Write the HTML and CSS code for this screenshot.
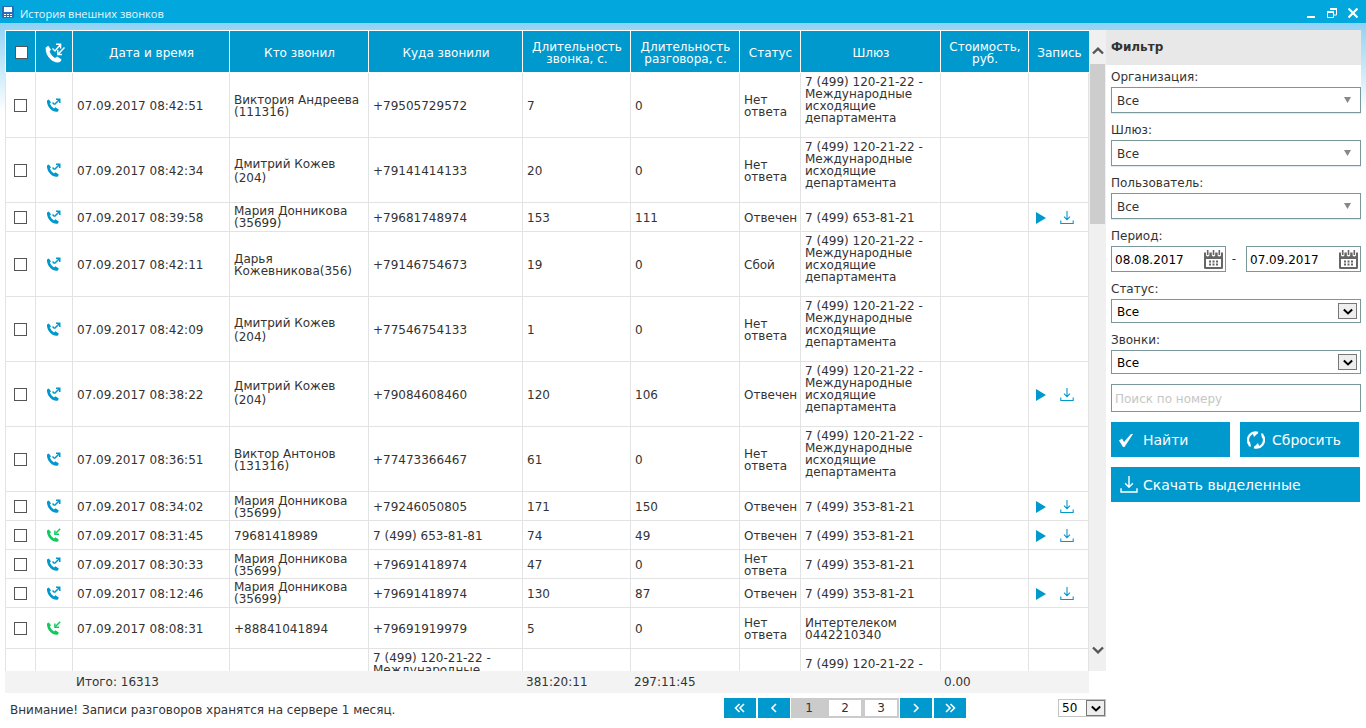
FILE: index.html
```
<!DOCTYPE html>
<html lang="ru">
<head>
<meta charset="utf-8">
<title>История внешних звонков</title>
<link rel="stylesheet" href="styles.css">
</head>
<body>
<svg class="defs" aria-hidden="true">
  <symbol id="handset" viewBox="0 0 14 14"><path fill="currentColor" d="M0 2.600 1.800 1.400 4 4.200 2.900 5.600C3.600 7.400 5 9.200 7 10.400L8.400 9.200 11.800 11.400 11 13.400C8.600 14.200 5.600 13.200 3.400 11 1.200 8.800-.3 5.600 0 2.600Z"/></symbol>
  <symbol id="call-out" viewBox="0 0 14 14"><use href="#handset" width="14" height="14"/><path fill="none" stroke="currentColor" stroke-width="1.500" d="M5.500 4.500 7.500 6.500M7.500 6.500 12 2"/><path fill="currentColor" d="M9 .5H13.500V5H12V2H9Z"/></symbol>
  <symbol id="call-in" viewBox="0 0 14 14"><use href="#handset" width="14" height="14"/><path fill="none" stroke="currentColor" stroke-width="1.500" d="M13.200.8 8.500 5.500"/><path fill="currentColor" d="M7.200 2.500H8.600V5.600H12V7H7.200Z"/></symbol>
  <symbol id="call-both" viewBox="0 0 20 20"><path fill="currentColor" d="M.8 4.400 3.200 2.800 6 6.400 4.600 8.600C5.600 11.400 7.600 13.600 10 15L12.200 13.400 16.600 16.600 15.200 19C12 20.200 8.200 19 5.200 16 2 13 .2 8.600.8 4.400Z"/><path fill="none" stroke="currentColor" stroke-width="1.400" d="M7.500 5.500 10 8 15 2M11 1.200H15.600V5.500M19.500 4.500 13.500 10.800M12.700 7V11.500H17"/></symbol>
  <symbol id="play" viewBox="0 0 10 12"><path fill="currentColor" d="M0 0V12L10 6Z"/></symbol>
  <symbol id="download" viewBox="0 0 14 14"><path fill="none" stroke="currentColor" stroke-width="1.100" d="M7 0V8.500M4 5.700 7 8.700 10 5.700M.8 9.500V12.500H13.200V9.500"/></symbol>
  <symbol id="check" viewBox="0 0 16 16"><path fill="currentColor" d="M1 8.500 4 6.500 6 10 13 2 15 2 6.500 15H5Z"/></symbol>
  <symbol id="refresh" viewBox="0 0 18 18"><path fill="none" stroke="currentColor" stroke-width="2.200" d="M2 12.500A7.500 7.500 0 0 1 11 1.800M16 5.500A7.500 7.500 0 0 1 7 16.200"/><path fill="currentColor" d="M5.500 2H11L7 6ZM12.500 16H7L11 12ZM0 11H3L4 15.500H2ZM18 7H15L14 2.500H16Z"/></symbol>
  <symbol id="calendar" viewBox="0 0 19 19"><path fill="#666" d="M0 2.500H2V5.500Q3.700 7.500 5.400 5.500V2.500H7.800V5.500Q9.500 7.500 11.200 5.500V2.500H13.600V5.500Q15.300 7.500 17 5.500V2.500H19V17.500Q19 19 17.500 19H1.500Q0 19 0 17.500Z"/><path fill="#fff" d="M2 9H17V17H2Z"/><path fill="#666" d="M2.900 0H4.500V5H2.900ZM8.700 0H10.300V5H8.700ZM14.500 0H16.100V5H14.500ZM5 10.500H7V12.500H5ZM8.500 10.500H10.500V12.500H8.500ZM12 10.500H14V12.500H12ZM5 13.500H7V15.500H5ZM8.500 13.500H10.500V15.500H8.500ZM12 13.500H14V15.500H12Z"/></symbol>
  <symbol id="triangle" viewBox="0 0 7 6"><path fill="#888" d="M0 0H7L3.500 6Z"/></symbol>
  <symbol id="chevron" viewBox="0 0 12 8"><path fill="none" stroke="currentColor" stroke-width="2.400" d="M1 1.500 6 6.300 11 1.500"/></symbol>
</svg>
<header class="titlebar">
  <svg class="app-icon" viewBox="0 0 12 12"><path fill="#2e6cb5" d="M0 0H12V12H0Z"/><path fill="#fff" d="M2 1H10V6H2ZM2 8H4V9H2ZM5 8H7V9H5ZM8 8H10V9H8ZM2 10H4V11H2ZM5 10H7V11H5ZM8 10H10V11H8Z"/></svg>
  <h1>История внешних звонков</h1>
  <div class="window-buttons">
    <button aria-label="Свернуть"><svg viewBox="0 0 10 12"><path fill="#fff" d="M1 9H9V11H1Z"/></svg></button>
    <button aria-label="Восстановить"><svg viewBox="0 0 10 12"><path fill="none" stroke="#fff" d="M.5 5.500H6.500V10.500H.5ZM3 2.500H9.500V8H7"/><path fill="#fff" d="M0 4H7V6H0ZM3 1H10V3H3Z"/></svg></button>
    <button aria-label="Закрыть"><svg viewBox="0 0 10 12"><path fill="none" stroke="#fff" stroke-width="2.200" d="M.5 1.500 9.500 10.500M9.500 1.500.5 10.500"/></svg></button>
  </div>
</header>
<div class="window">
<main class="journal">
  <div class="grid-area">
    <div class="grid-clip">
    <table class="calls">
      <colgroup><col class="c-check"><col class="c-type"><col class="c-date"><col class="c-from"><col class="c-to"><col class="c-dur"><col class="c-talk"><col class="c-status"><col class="c-gate"><col class="c-cost"><col class="c-rec"></colgroup>
      <thead><tr><th><input type="checkbox" aria-label="Выбрать все"></th><th><svg class="head-call"><use href="#call-both"/></svg></th><th>Дата и время</th><th>Кто звонил</th><th>Куда звонили</th><th>Длительность<br>звонка, с.</th><th>Длительность<br>разговора, с.</th><th>Статус</th><th>Шлюз</th><th>Стоимость,<br>руб.</th><th>Запись</th></tr></thead>
      <tbody>
      <tr><td class="mid"><input type="checkbox" aria-label="Выбрать"></td><td class="mid"><svg class="call"><use href="#call-out"/></svg></td><td>07.09.2017 08:42:51</td><td>Виктория Андреева<br>(111316)</td><td>+79505729572</td><td>7</td><td>0</td><td>Нет<br>ответа</td><td>7 (499) 120-21-22 -<br>Международные<br>исходящие<br>департамента<br><br></td><td></td><td></td></tr>
      <tr><td class="mid"><input type="checkbox" aria-label="Выбрать"></td><td class="mid"><svg class="call"><use href="#call-out"/></svg></td><td>07.09.2017 08:42:34</td><td class="loose">Дмитрий Кожев<br>(204)</td><td>+79141414133</td><td>20</td><td>0</td><td>Нет<br>ответа</td><td>7 (499) 120-21-22 -<br>Международные<br>исходящие<br>департамента<br><br></td><td></td><td></td></tr>
      <tr><td class="mid"><input type="checkbox" aria-label="Выбрать"></td><td class="mid"><svg class="call"><use href="#call-out"/></svg></td><td>07.09.2017 08:39:58</td><td class="top">Мария Донникова<br>(35699)</td><td>+79681748974</td><td>153</td><td>111</td><td>Отвечен</td><td>7 (499) 653-81-21</td><td></td><td><div class="record"><button aria-label="Слушать"><svg class="play"><use href="#play"/></svg></button><button aria-label="Скачать"><svg class="load"><use href="#download"/></svg></button></div></td></tr>
      <tr><td class="mid"><input type="checkbox" aria-label="Выбрать"></td><td class="mid"><svg class="call"><use href="#call-out"/></svg></td><td>07.09.2017 08:42:11</td><td>Дарья<br>Кожевникова(356)</td><td>+79146754673</td><td>19</td><td>0</td><td>Сбой</td><td>7 (499) 120-21-22 -<br>Международные<br>исходящие<br>департамента<br><br></td><td></td><td></td></tr>
      <tr><td class="mid"><input type="checkbox" aria-label="Выбрать"></td><td class="mid"><svg class="call"><use href="#call-out"/></svg></td><td>07.09.2017 08:42:09</td><td class="loose">Дмитрий Кожев<br>(204)</td><td>+77546754133</td><td>1</td><td>0</td><td>Нет<br>ответа</td><td>7 (499) 120-21-22 -<br>Международные<br>исходящие<br>департамента<br><br></td><td></td><td></td></tr>
      <tr><td class="mid"><input type="checkbox" aria-label="Выбрать"></td><td class="mid"><svg class="call"><use href="#call-out"/></svg></td><td>07.09.2017 08:38:22</td><td class="loose raised">Дмитрий Кожев<br>(204)</td><td>+79084608460</td><td>120</td><td>106</td><td>Отвечен</td><td>7 (499) 120-21-22 -<br>Международные<br>исходящие<br>департамента<br><br></td><td></td><td><div class="record"><button aria-label="Слушать"><svg class="play"><use href="#play"/></svg></button><button aria-label="Скачать"><svg class="load"><use href="#download"/></svg></button></div></td></tr>
      <tr><td class="mid"><input type="checkbox" aria-label="Выбрать"></td><td class="mid"><svg class="call"><use href="#call-out"/></svg></td><td>07.09.2017 08:36:51</td><td>Виктор Антонов<br>(131316)</td><td>+77473366467</td><td>61</td><td>0</td><td>Нет<br>ответа</td><td>7 (499) 120-21-22 -<br>Международные<br>исходящие<br>департамента<br><br></td><td></td><td></td></tr>
      <tr><td class="mid"><input type="checkbox" aria-label="Выбрать"></td><td class="mid"><svg class="call"><use href="#call-out"/></svg></td><td>07.09.2017 08:34:02</td><td>Мария Донникова<br>(35699)</td><td>+79246050805</td><td>171</td><td>150</td><td>Отвечен</td><td>7 (499) 353-81-21</td><td></td><td><div class="record"><button aria-label="Слушать"><svg class="play"><use href="#play"/></svg></button><button aria-label="Скачать"><svg class="load"><use href="#download"/></svg></button></div></td></tr>
      <tr><td class="mid"><input type="checkbox" aria-label="Выбрать"></td><td class="mid"><svg class="call incoming"><use href="#call-in"/></svg></td><td>07.09.2017 08:31:45</td><td>79681418989</td><td>7 (499) 653-81-81</td><td>74</td><td>49</td><td>Отвечен</td><td>7 (499) 353-81-21</td><td></td><td><div class="record"><button aria-label="Слушать"><svg class="play"><use href="#play"/></svg></button><button aria-label="Скачать"><svg class="load"><use href="#download"/></svg></button></div></td></tr>
      <tr><td class="mid"><input type="checkbox" aria-label="Выбрать"></td><td class="mid"><svg class="call"><use href="#call-out"/></svg></td><td>07.09.2017 08:30:33</td><td>Мария Донникова<br>(35699)</td><td>+79691418974</td><td>47</td><td>0</td><td>Нет<br>ответа</td><td>7 (499) 353-81-21</td><td></td><td></td></tr>
      <tr><td class="mid"><input type="checkbox" aria-label="Выбрать"></td><td class="mid"><svg class="call"><use href="#call-out"/></svg></td><td>07.09.2017 08:12:46</td><td class="top">Мария Донникова<br>(35699)</td><td>+79691418974</td><td>130</td><td>87</td><td>Отвечен</td><td>7 (499) 353-81-21</td><td></td><td><div class="record"><button aria-label="Слушать"><svg class="play"><use href="#play"/></svg></button><button aria-label="Скачать"><svg class="load"><use href="#download"/></svg></button></div></td></tr>
      <tr class="tall"><td class="mid"><input type="checkbox" aria-label="Выбрать"></td><td class="mid"><svg class="call incoming"><use href="#call-in"/></svg></td><td>07.09.2017 08:08:31</td><td>+88841041894</td><td>+79691919979</td><td>5</td><td>0</td><td>Нет<br>ответа</td><td>Интертелеком<br>0442210340</td><td></td><td></td></tr>
      <tr><td></td><td></td><td></td><td></td><td>7 (499) 120-21-22 -<br>Международные<br><br><br><br></td><td></td><td></td><td></td><td>7 (499) 120-21-22 -<br><br><br><br></td><td></td><td></td></tr>
      </tbody>
    </table>
    </div>
    <div class="scrollbar">
      <button aria-label="Вверх"><svg class="up"><use href="#chevron"/></svg></button>
      <div class="track"><div class="thumb"></div></div>
      <button class="down" aria-label="Вниз"><svg><use href="#chevron"/></svg></button>
    </div>
  </div>
  <table class="totals">
    <colgroup><col class="c-check"><col class="c-type"><col class="c-date"><col class="c-from"><col class="c-to"><col class="c-dur"><col class="c-talk"><col class="c-status"><col class="c-gate"><col class="c-cost"><col class="c-rec"></colgroup>
    <tbody><tr><td></td><td></td><td>Итого: 16313</td><td></td><td></td><td>381:20:11</td><td>297:11:45</td><td></td><td></td><td>0.00</td><td></td></tr></tbody>
  </table>
  <footer class="bottom">
    <p>Внимание! Записи разговоров хранятся на сервере 1 месяц.</p>
    <nav class="pager">
      <button aria-label="Первая"><svg viewBox="0 0 12 12"><path d="M5.500 2 1.500 6 5.500 10M10 2 6 6 10 10"/></svg></button>
      <button aria-label="Назад"><svg viewBox="0 0 12 12"><path d="M8 2 4 6 8 10"/></svg></button>
      <div class="pages"><a class="current" href="#">1</a><a href="#">2</a><a href="#">3</a></div>
      <button aria-label="Вперёд"><svg viewBox="0 0 12 12"><path d="M4 2 8 6 4 10"/></svg></button>
      <button aria-label="Последняя"><svg viewBox="0 0 12 12"><path d="M2 2 6 6 2 10M6.500 2 10.500 6 6.500 10"/></svg></button>
    </nav>
    <div class="page-size"><select aria-label="Строк на странице"><option>50</option></select><span class="drop"><svg><use href="#chevron"/></svg></span></div>
  </footer>
</main>
<aside class="filter">
  <h2>Фильтр</h2>
  <form>
    <label for="org">Организация:</label>
    <div class="field combo"><select id="org"><option>Все</option></select><svg><use href="#triangle"/></svg></div>
    <label for="gate">Шлюз:</label>
    <div class="field combo"><select id="gate"><option>Все</option></select><svg><use href="#triangle"/></svg></div>
    <label for="user">Пользователь:</label>
    <div class="field combo"><select id="user"><option>Все</option></select><svg><use href="#triangle"/></svg></div>
    <label for="since">Период:</label>
    <div class="period">
      <div class="date"><input id="since" type="text" value="08.08.2017"><button type="button" aria-label="Календарь"><svg><use href="#calendar"/></svg></button></div>
      <span>-</span>
      <div class="date"><input type="text" value="07.09.2017" aria-label="Конец периода"><button type="button" aria-label="Календарь"><svg><use href="#calendar"/></svg></button></div>
    </div>
    <label for="status">Статус:</label>
    <div class="field native"><select id="status"><option>Все</option></select><span class="drop"><svg><use href="#chevron"/></svg></span></div>
    <label for="kind">Звонки:</label>
    <div class="field native"><select id="kind"><option>Все</option></select><span class="drop"><svg><use href="#chevron"/></svg></span></div>
    <input class="search" type="text" placeholder="Поиск по номеру" aria-label="Поиск по номеру">
    <div class="actions">
      <button type="button"><svg class="i-check"><use href="#check"/></svg>Найти</button>
      <button type="button"><svg class="i-refresh"><use href="#refresh"/></svg>Сбросить</button>
    </div>
    <button type="button" class="wide"><svg class="i-load"><use href="#download"/></svg>Скачать выделенные</button>
  </form>
</aside>
</div>
</body>
</html>
```

FILE: styles.css
```
* { box-sizing: border-box; }
body {
  margin: 0;
  height: 100vh;
  display: flex;
  flex-direction: column;
  overflow: hidden;
  background: linear-gradient(#8fd2f4 23px, #fff 112px);
  color: #333;
  font-family: "DejaVu Sans", Verdana, sans-serif;
  font-size: 12px;
  line-height: 12px;
}
.defs { position: absolute; width: 0; height: 0; }
button, input, select { font: inherit; color: inherit; margin: 0; }
button { padding: 0; border: 0; background: none; }
svg { display: block; }
select { appearance: none; border: 0; background: #fff; border-radius: 0; }

.titlebar {
  height: 23px;
  padding: 0 8px 0 2px;
  display: flex;
  align-items: center;
  gap: 6px;
  background: #02a8dd;
  color: #e6f7fd;
}
.titlebar h1 {
  flex: 1;
  margin: 4px 0 0;
  font: 11px/16px "Open Sans", "Noto Sans", sans-serif;
}
.app-icon { width: 12px; height: 12px; }
.window-buttons { display: flex; gap: 11px; padding-top: 3px; }
.window-buttons svg { width: 10px; height: 12px; }

.window { flex: 1; min-height: 0; display: flex; padding: 7px 5px 0; }
.journal { flex: 1; min-width: 0; display: flex; flex-direction: column; background: #fff; }
.grid-area { flex: 1; min-height: 0; display: flex; }
.grid-clip { flex: 1; min-width: 0; overflow: hidden; }

.calls, .totals { width: 100%; table-layout: fixed; border-spacing: 0; }
.c-check { width: 30px; }
.c-type { width: 37px; }
.c-date { width: 157px; }
.c-from { width: 139px; }
.c-to { width: 154px; }
.c-dur { width: 108px; }
.c-talk { width: 109px; }
.c-status { width: 61px; }
.c-gate { width: 140px; }
.c-cost { width: 88px; }
.c-rec { width: 61px; }
.calls th {
  height: 43px;
  padding: 2px 0 0 1px;
  border: 1px solid #fff;
  border-right: 0;
  background: #0099ce;
  color: #fff;
  font-weight: normal;
}
.calls td {
  height: 29px;
  padding: 3px 0 1px 4px;
  border-left: 1px solid #e3e3e3;
  border-bottom: 1px solid #e3e3e3;
  background: #fff;
  white-space: nowrap;
}
.calls td:last-child { border-right: 1px solid #e3e3e3; }
.calls .tall td { height: 41px; }
.calls .loose { line-height: 14px; }
.calls .raised { padding-bottom: 6px; }
.calls .top { padding: 2px 0 2px 4px; }
.calls td.mid { padding: 0; }
.calls input {
  display: block;
  appearance: none;
  width: 13px;
  height: 13px;
  margin: 0 auto;
  border: 1px solid #555;
  background: #fff;
}
.calls svg { color: #0099ce; }
.call { width: 14px; height: 14px; margin: 0 auto; }
.calls .incoming { color: #0fca5e; }
.calls .head-call { width: 20px; height: 20px; margin: 0 auto; color: #fff; }
.record { display: flex; align-items: center; gap: 14px; padding-left: 3px; }
.play { width: 10px; height: 12px; }
.load { width: 14px; height: 14px; }

.scrollbar {
  width: 17px;
  display: flex;
  flex-direction: column;
  background: #f0f0f0;
  color: #555;
}
.scrollbar button { height: 34px; display: grid; place-items: center; padding-top: 8px; }
.scrollbar .down { padding: 0 0 9px; }
.scrollbar svg { width: 12px; height: 8px; }
.scrollbar .up { transform: rotate(180deg); }
.track { flex: 1; padding: 0 1px; }
.thumb { height: 160px; background: #cdcdcd; }

.totals { width: calc(100% - 17px); background: #f3f3f3; }
.totals td { height: 22px; padding: 0 0 0 4px; }

.bottom { height: 35px; display: flex; align-items: center; padding: 0 0 5px 5px; }
.bottom p { margin: 0; flex: 1; padding-top: 3px; }
.pager { display: flex; gap: 2px; }
.pager button { width: 32px; height: 20px; background: #0099ce; display: grid; place-items: center; }
.pager svg { width: 12px; height: 12px; fill: none; stroke: #fff; stroke-width: 1.600; }
.pages { display: flex; gap: 4px; padding: 2px; background: #cbcbcb; width: 108px; margin: 0 -1px 0 -1px; }
.pages a { flex: 1; background: #fff; color: #333; text-decoration: none; text-align: center; line-height: 16px; }
.pages .current { background: none; }
.page-size { display: flex; width: 48px; height: 18px; margin-left: 92px; border: 1px solid #c4c4c4; position: relative; }
.page-size select { width: 100%; padding: 0 0 0 3px; color: #000; }
.drop {
  position: absolute;
  display: grid;
  place-items: center;
  background: #eee;
  border: 1px solid #777;
  color: #000;
  pointer-events: none;
}
.drop svg { width: 10px; height: 7px; }
.page-size .drop { right: 0; top: 0; width: 19px; height: 16px; }

.filter { width: 255px; background: #fff; }
.filter h2 { margin: 0; height: 35px; padding: 0 5px; background: #e8e8e8; font-size: 12px; line-height: 34px; }
.filter form { padding: 2px 0 0 5px; display: flex; flex-direction: column; }
.filter label { height: 20px; line-height: 21px; }
.field, .date { position: relative; border: 1px solid #7a979b; background: #fff; }
.field { height: 26px; margin-bottom: 7px; }
.field select { display: block; width: 100%; height: 100%; padding: 1px 24px 0 5px; }
.combo { box-shadow: 0 1px 1px #e3eaf0; }
.combo svg { position: absolute; right: 9px; top: 9px; width: 7px; height: 6px; }
.native { height: 24px; }
.native select { color: #000; }
.native .drop { right: 3px; top: 3px; width: 19px; height: 16px; }
.period { display: flex; justify-content: space-between; align-items: center; margin-bottom: 7px; }
.period span { padding-right: 4px; }
.date { display: flex; align-items: center; width: 115px; height: 26px; padding: 0 2px 0 3px; }
.date input { flex: 1; min-width: 0; padding: 1px 0 0; border: 0; color: #000; }
.date svg { width: 19px; height: 19px; }
.search { height: 28px; margin-top: 3px; padding: 1px 3px 0; border: 1px solid #7a979b; }
.search::placeholder { color: #c6c6c6; opacity: 1; }
.actions { display: flex; gap: 10px; margin: 10px 2px 10px 0; }
.actions button, .wide {
  height: 35px;
  display: flex;
  align-items: center;
  background: #0099ce;
  color: #fff;
  font-size: 14px;
  padding-left: 7px;
}
.actions button { flex: 1; }
.i-check { width: 16px; height: 16px; margin-right: 9px; }
.i-refresh { width: 18px; height: 18px; margin-right: 7px; }
.i-load { width: 18px; height: 18px; margin: 0 5px 0 2px; }
.wide { margin-right: 1px; }
```
